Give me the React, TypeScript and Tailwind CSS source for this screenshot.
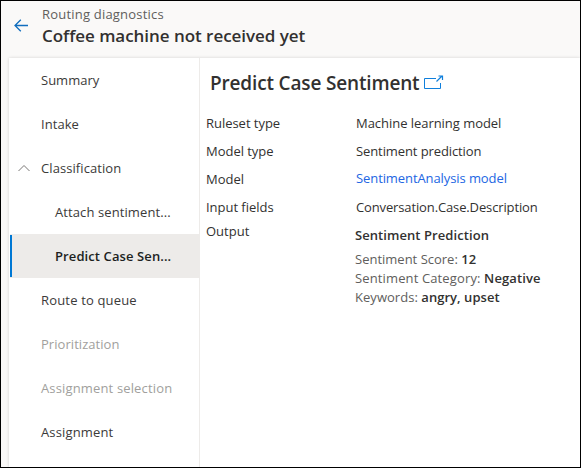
import React from "react";

type NavItem = {
  label: string;
  tracking: string;
  child?: boolean;
  selected?: boolean;
  disabled?: boolean;
  expanded?: boolean;
};

const navItems: NavItem[] = [
  { label: "Summary", tracking: "tracking-[0px]" },
  { label: "Intake", tracking: "tracking-[0.05px]" },
  { label: "Classification", tracking: "tracking-[0.08px]", expanded: true },
  { label: "Attach sentiment...", tracking: "tracking-[0.1px]", child: true },
  { label: "Predict Case Sen...", tracking: "tracking-[0.1px]", child: true, selected: true },
  { label: "Route to queue", tracking: "tracking-[0.17px]" },
  { label: "Prioritization", tracking: "tracking-[0.05px]", disabled: true },
  { label: "Assignment selection", tracking: "tracking-[0.15px]", disabled: true },
  { label: "Assignment", tracking: "tracking-[0.15px]" },
];

const fields = [
  { name: "Ruleset type", value: "Machine learning model", tracking: "tracking-[-0.04px]" },
  { name: "Model type", value: "Sentiment prediction", tracking: "tracking-[-0.1px]" },
  { name: "Model", value: "SentimentAnalysis model", tracking: "tracking-[-0.09px]", link: true },
  { name: "Input fields", value: "Conversation.Case.Description", tracking: "tracking-[-0.13px]" },
];

function BackArrow() {
  return (
    <svg width="14" height="13" viewBox="0 0 14 13" fill="none" stroke="#106ebe" strokeWidth="1.3">
      <path d="M14 6.5H1M6.8 .7 1 6.5l5.8 5.8" />
    </svg>
  );
}

function PopOut() {
  return (
    <svg className="-mt-0.5" width="20" height="15" viewBox="0 0 20 15" fill="none" stroke="#0f7fdc">
      <path d="M12 3.5H.5v10h16V8" />
      <path d="m12.5 6.5 5.5-5.5M14.5 1h4v4" strokeWidth="1.2" />
    </svg>
  );
}

function NavRow({ item }: { item: NavItem }) {
  const color = item.selected ? "bg-[#edebe9] text-[#201f1e] font-semibold" : item.disabled ? "text-[#a19f9d]" : "text-[#3b3a39]";
  return (
    <li className={`flex h-11 items-center ${color}`}>
      <span className={`h-[42px] w-[2px] ${item.selected ? "bg-[#0078d4]" : ""}`} />
      <span className={`flex items-center ${item.child ? "w-[43px]" : "w-[29px]"}`}>
        {item.expanded && (
          <svg className="ml-[6px]" width="12" height="8" viewBox="0 0 12 8" fill="none" stroke="#797775">
            <path d="M.5 7 6 1.5 11.5 7" />
          </svg>
        )}
      </span>
      <span className={`whitespace-nowrap ${item.tracking}`}>{item.label}</span>
    </li>
  );
}

export default function App() {
  return (
    <div className="flex h-[468px] w-[581px] flex-col overflow-hidden border border-black bg-[#faf9f8] font-['Open_Sans','Noto_Sans',sans-serif] text-[13px] leading-5 text-[#323130]">
      <header className="flex h-[57px] shrink-0 pl-[13px]">
        <div className="w-7 pt-[18px]"><BackArrow /></div>
        <div className="pt-[3px]">
          <p className="tracking-[0.2px] text-[#605e5c]">Routing diagnostics</p>
          <h1 className="text-[17px] font-semibold leading-6 tracking-[-0.04px]">Coffee machine not received yet</h1>
        </div>
      </header>
      <div className="ml-2 flex grow bg-white shadow-[0_0_3px_rgba(0,0,0,0.16)]">
        <nav className="w-[191px] shrink-0 border-r border-[#edebe9] pl-px">
          <ul>{navItems.map((item) => <NavRow key={item.label} item={item} />)}</ul>
        </nav>
        <main className="pl-[6px] pt-[11px]">
          <h2 className="flex h-7 items-center gap-[5px] pl-1 text-[19px] font-semibold leading-7">
            <span className="tracking-[-0.16px]">Predict Case Sentiment</span>
            <PopOut />
          </h2>
          <dl className="pt-[12px]">
            {fields.map((f) => (
              <div key={f.name} className="flex h-7 items-center">
                <dt className="w-[150px] tracking-[-0.03px]">{f.name}</dt>
                <dd className={`${f.tracking} ${f.link ? "-mt-0.5 text-[#2266e3]" : ""}`}>{f.value}</dd>
              </div>
            ))}
            <div className="flex">
              <dt className="w-[149px]">Output</dt>
              <dd className="pt-1">
                <p className="font-semibold tracking-[0.07px]">Sentiment Prediction</p>
                <div className="pt-[5px] leading-[19px] text-[#605e5c]">
                  <p>Sentiment Score: <b className="font-semibold text-[#323130]">12</b></p>
                  <p className="tracking-[0.13px]">Sentiment Category: <b className="font-semibold text-[#323130]">Negative</b></p>
                  <p className="tracking-[0.04px]">Keywords: <b className="font-semibold text-[#323130]">angry, upset</b></p>
                </div>
              </dd>
            </div>
          </dl>
        </main>
      </div>
    </div>
  );
}
